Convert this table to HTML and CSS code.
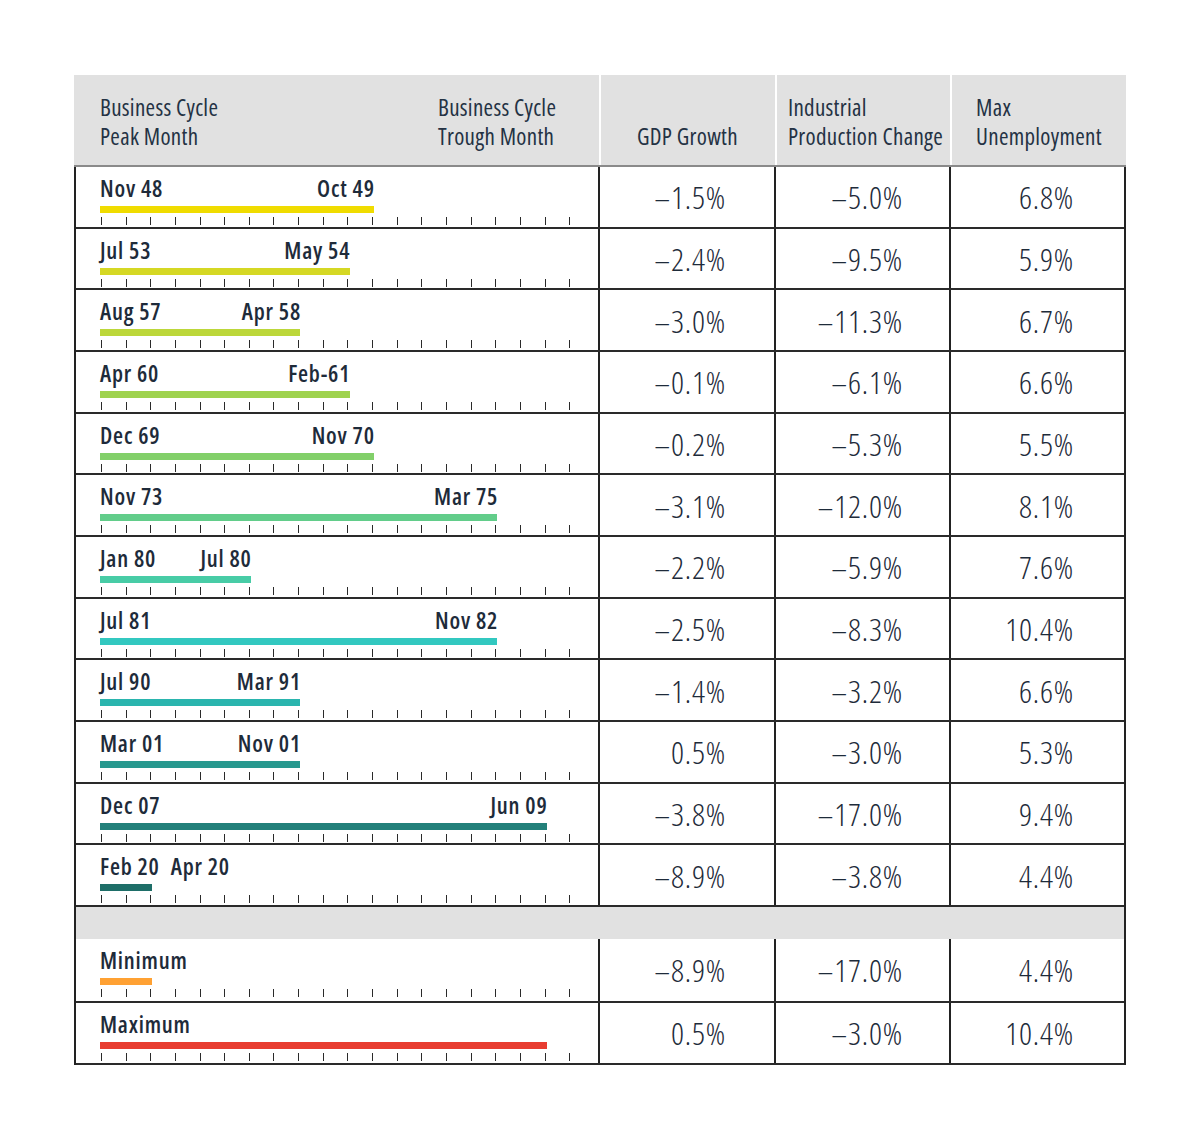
FILE: index.html
```html
<!DOCTYPE html>
<html lang="en">
<head>
<meta charset="utf-8">
<title>Recessions</title>
<link rel="stylesheet" href="styles.css">
</head>
<body>
<div class="page">
  <div class="table">
    <div class="head">
      <div class="hcell h1">
        <div class="hsub">Business Cycle<br>Peak Month</div>
        <div class="hsub trough">Business Cycle<br>Trough Month</div>
      </div>
      <div class="hcell h2"><div class="hsub single">GDP Growth</div></div>
      <div class="hcell h3"><div class="hsub">Industrial<br>Production Change</div></div>
      <div class="hcell h4"><div class="hsub">Max<br>Unemployment</div></div>
    </div>
    <div class="body">
      <div class="row">
        <div class="cycle"><div class="span" style="width:274px"><div class="lbl"><span>Nov 48</span><span>Oct 49</span></div><div class="bar c1"></div></div><div class="ticks"><i></i><i></i><i></i><i></i><i></i><i></i><i></i><i></i><i></i><i></i><i></i><i></i><i></i><i></i><i></i><i></i><i></i><i></i><i></i><i></i></div></div>
        <div class="val v2">–1.5%</div><div class="val v3">–5.0%</div><div class="val v4">6.8%</div>
      </div>
      <div class="row">
        <div class="cycle"><div class="span" style="width:249.5px"><div class="lbl"><span>Jul 53</span><span>May 54</span></div><div class="bar c2"></div></div><div class="ticks"><i></i><i></i><i></i><i></i><i></i><i></i><i></i><i></i><i></i><i></i><i></i><i></i><i></i><i></i><i></i><i></i><i></i><i></i><i></i><i></i></div></div>
        <div class="val v2">–2.4%</div><div class="val v3">–9.5%</div><div class="val v4">5.9%</div>
      </div>
      <div class="row">
        <div class="cycle"><div class="span" style="width:200.2px"><div class="lbl"><span>Aug 57</span><span>Apr 58</span></div><div class="bar c3"></div></div><div class="ticks"><i></i><i></i><i></i><i></i><i></i><i></i><i></i><i></i><i></i><i></i><i></i><i></i><i></i><i></i><i></i><i></i><i></i><i></i><i></i><i></i></div></div>
        <div class="val v2">–3.0%</div><div class="val v3">–11.3%</div><div class="val v4">6.7%</div>
      </div>
      <div class="row">
        <div class="cycle"><div class="span" style="width:249.5px"><div class="lbl"><span>Apr 60</span><span>Feb-61</span></div><div class="bar c4"></div></div><div class="ticks"><i></i><i></i><i></i><i></i><i></i><i></i><i></i><i></i><i></i><i></i><i></i><i></i><i></i><i></i><i></i><i></i><i></i><i></i><i></i><i></i></div></div>
        <div class="val v2">–0.1%</div><div class="val v3">–6.1%</div><div class="val v4">6.6%</div>
      </div>
      <div class="row">
        <div class="cycle"><div class="span" style="width:274px"><div class="lbl"><span>Dec 69</span><span>Nov 70</span></div><div class="bar c5"></div></div><div class="ticks"><i></i><i></i><i></i><i></i><i></i><i></i><i></i><i></i><i></i><i></i><i></i><i></i><i></i><i></i><i></i><i></i><i></i><i></i><i></i><i></i></div></div>
        <div class="val v2">–0.2%</div><div class="val v3">–5.3%</div><div class="val v4">5.5%</div>
      </div>
      <div class="row">
        <div class="cycle"><div class="span" style="width:397.4px"><div class="lbl"><span>Nov 73</span><span>Mar 75</span></div><div class="bar c6"></div></div><div class="ticks"><i></i><i></i><i></i><i></i><i></i><i></i><i></i><i></i><i></i><i></i><i></i><i></i><i></i><i></i><i></i><i></i><i></i><i></i><i></i><i></i></div></div>
        <div class="val v2">–3.1%</div><div class="val v3">–12.0%</div><div class="val v4">8.1%</div>
      </div>
      <div class="row">
        <div class="cycle"><div class="span" style="width:150.9px"><div class="lbl"><span>Jan 80</span><span>Jul 80</span></div><div class="bar c7"></div></div><div class="ticks"><i></i><i></i><i></i><i></i><i></i><i></i><i></i><i></i><i></i><i></i><i></i><i></i><i></i><i></i><i></i><i></i><i></i><i></i><i></i><i></i></div></div>
        <div class="val v2">–2.2%</div><div class="val v3">–5.9%</div><div class="val v4">7.6%</div>
      </div>
      <div class="row">
        <div class="cycle"><div class="span" style="width:397.4px"><div class="lbl"><span>Jul 81</span><span>Nov 82</span></div><div class="bar c8"></div></div><div class="ticks"><i></i><i></i><i></i><i></i><i></i><i></i><i></i><i></i><i></i><i></i><i></i><i></i><i></i><i></i><i></i><i></i><i></i><i></i><i></i><i></i></div></div>
        <div class="val v2">–2.5%</div><div class="val v3">–8.3%</div><div class="val v4">10.4%</div>
      </div>
      <div class="row">
        <div class="cycle"><div class="span" style="width:200.2px"><div class="lbl"><span>Jul 90</span><span>Mar 91</span></div><div class="bar c9"></div></div><div class="ticks"><i></i><i></i><i></i><i></i><i></i><i></i><i></i><i></i><i></i><i></i><i></i><i></i><i></i><i></i><i></i><i></i><i></i><i></i><i></i><i></i></div></div>
        <div class="val v2">–1.4%</div><div class="val v3">–3.2%</div><div class="val v4">6.6%</div>
      </div>
      <div class="row">
        <div class="cycle"><div class="span" style="width:200.2px"><div class="lbl"><span>Mar 01</span><span>Nov 01</span></div><div class="bar c10"></div></div><div class="ticks"><i></i><i></i><i></i><i></i><i></i><i></i><i></i><i></i><i></i><i></i><i></i><i></i><i></i><i></i><i></i><i></i><i></i><i></i><i></i><i></i></div></div>
        <div class="val v2">0.5%</div><div class="val v3">–3.0%</div><div class="val v4">5.3%</div>
      </div>
      <div class="row">
        <div class="cycle"><div class="span" style="width:446.7px"><div class="lbl"><span>Dec 07</span><span>Jun 09</span></div><div class="bar c11"></div></div><div class="ticks"><i></i><i></i><i></i><i></i><i></i><i></i><i></i><i></i><i></i><i></i><i></i><i></i><i></i><i></i><i></i><i></i><i></i><i></i><i></i><i></i></div></div>
        <div class="val v2">–3.8%</div><div class="val v3">–17.0%</div><div class="val v4">9.4%</div>
      </div>
      <div class="row">
        <div class="cycle"><div class="span" style="width:52.3px"><div class="lbl"><span>Feb 20</span><span>Apr 20</span></div><div class="bar c12"></div></div><div class="ticks"><i></i><i></i><i></i><i></i><i></i><i></i><i></i><i></i><i></i><i></i><i></i><i></i><i></i><i></i><i></i><i></i><i></i><i></i><i></i><i></i></div></div>
        <div class="val v2">–8.9%</div><div class="val v3">–3.8%</div><div class="val v4">4.4%</div>
      </div>
      <div class="band"></div>
      <div class="row row-min">
        <div class="cycle"><div class="span" style="width:52.3px"><div class="lbl"><span>Minimum</span></div><div class="bar cmin"></div></div><div class="ticks"><i></i><i></i><i></i><i></i><i></i><i></i><i></i><i></i><i></i><i></i><i></i><i></i><i></i><i></i><i></i><i></i><i></i><i></i><i></i><i></i></div></div>
        <div class="val v2">–8.9%</div><div class="val v3">–17.0%</div><div class="val v4">4.4%</div>
      </div>
      <div class="row row-max">
        <div class="cycle"><div class="span" style="width:446.7px"><div class="lbl"><span>Maximum</span></div><div class="bar cmax"></div></div><div class="ticks"><i></i><i></i><i></i><i></i><i></i><i></i><i></i><i></i><i></i><i></i><i></i><i></i><i></i><i></i><i></i><i></i><i></i><i></i><i></i><i></i></div></div>
        <div class="val v2">0.5%</div><div class="val v3">–3.0%</div><div class="val v4">10.4%</div>
      </div>
    </div>
  </div>
</div>
</body>
</html>
```
FILE: styles.css
```css
* { box-sizing: border-box; }
html, body { margin: 0; padding: 0; background: #fff; }
body {
  font-family: "Open Sans", "DejaVu Sans Condensed", sans-serif;
  font-stretch: 75%;
  color: #1e2b3a;
}
.page { padding: 75px 0 0 74px; }
.table { width: 1052px; }

/* header */
.head {
  display: grid;
  grid-template-columns: 525px 174px 173px 174px;
  column-gap: 2px;
  height: 92px;
  border-bottom: 2px solid #8a8a8a;
}
.hcell {
  background: #e1e1e1;
  padding-top: 18px;
  font-size: 23px;
  font-weight: 400;
  line-height: 29px;
  letter-spacing: 0.3px;
  color: #243244;
}
.h1 { display: grid; grid-template-columns: 338px auto; padding-left: 26px; }
.h2 { padding-left: 36px; }
.h3 { padding-left: 11px; }
.h4 { padding-left: 24px; }
.hsub.single { padding-top: 29px; }

/* body */
.body {
  border-left: 2px solid #222;
  border-right: 2px solid #222;
}
.row {
  display: grid;
  grid-template-columns: 524px 176px 175px 173px;
  height: 61.67px;
  border-bottom: 2px solid #2a2a2a;
}
.row-min { height: 64px; }
.row-max { height: 62px; }
.cycle {
  border-right: 2px solid #222;
  padding: 9px 0 0 24px;
  display: flex;
  flex-direction: column;
}
.span { display: flex; flex-direction: column; }
.lbl {
  display: flex;
  justify-content: space-between;
  gap: 11px;
  min-width: max-content;
  font-size: 23px;
  font-weight: 600;
  line-height: 24px;
  height: 24px;
  letter-spacing: 0.8px;
  margin-right: -0.8px;
  white-space: nowrap;
}
.bar { height: 7px; margin-top: 6px; }
.ticks {
  margin-top: 4px;
  margin-left: 1px;
  width: 469.4px;
  height: 8px;
  display: flex;
  justify-content: space-between;
}
.ticks i {
  display: block;
  width: 1px;
  height: 8px;
  background: #2a2a2a;
}
.val {
  display: flex;
  align-items: center;
  justify-content: flex-end;
  font-size: 32px;
  font-weight: 300;
  letter-spacing: 0.8px;
  white-space: nowrap;
}
.v2 { border-right: 2px solid #222; padding-right: 48px; }
.v3 { border-right: 2px solid #222; padding-right: 46px; }
.v4 { padding-right: 50px; }

.band {
  height: 32px;
  background: #e1e1e1;
}

.c1 { background: #f0dc00; }
.c2 { background: #d5d824; }
.c3 { background: #bcd73a; }
.c4 { background: #9fd34f; }
.c5 { background: #82d06a; }
.c6 { background: #62cd8a; }
.c7 { background: #48cca6; }
.c8 { background: #32c8c0; }
.c9 { background: #2ab5ae; }
.c10 { background: #28998f; }
.c11 { background: #23807a; }
.c12 { background: #1e6e68; }
.cmin { background: #ffa133; }
.cmax { background: #e83d31; }
```
